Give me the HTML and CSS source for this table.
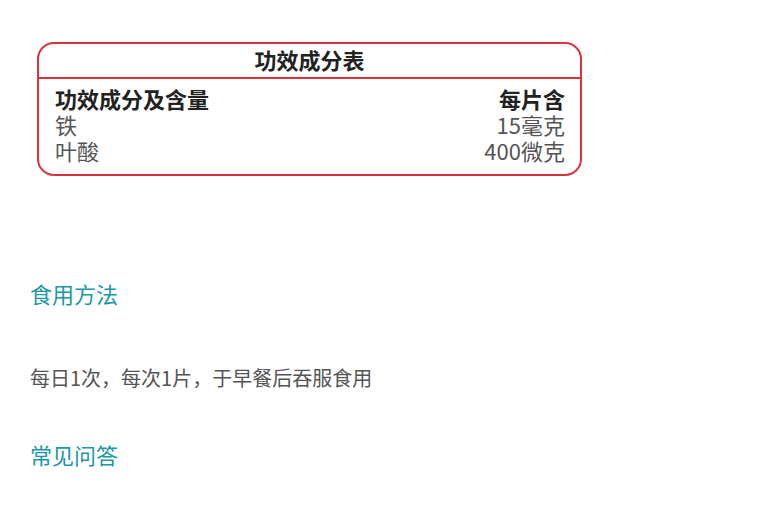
FILE: index.html
```html
<!DOCTYPE html>
<html lang="zh-CN">
<head>
    <meta charset="UTF-8" />
    <title>功效成分</title>
    <link rel="stylesheet" href="styles.css">
</head>
<body>

<div class="page">
    <div class="facts">
        <div class="facts-title">功效成分表</div>
        <div class="facts-body">
            <div class="facts-row head">
                <span>功效成分及含量</span>
                <span>每片含</span>
            </div>
            <div class="facts-row">
                <span>铁</span>
                <span>15毫克</span>
            </div>
            <div class="facts-row">
                <span>叶酸</span>
                <span>400微克</span>
            </div>
        </div>
    </div>

    <h2 class="section-title first">食用方法</h2>
    <p class="section-text">每日1次，每次1片，于早餐后吞服食用</p>

    <h2 class="section-title">常见问答</h2>
</div>

</body>
</html>
```
FILE: styles.css
```css
body {
    margin: 0;
    padding: 0;
    background: #fff;
    font-family: "Noto Sans CJK SC", "Noto Sans", sans-serif;
}

.page {
    padding: 42px 30px 0 30px;
}

.facts {
    width: 545px;
    margin-left: 7px;
    box-sizing: border-box;
    border: 2px solid #d9343d;
    border-radius: 17px;
}

.facts-title {
    height: 33px;
    line-height: 31px;
    text-align: center;
    font-size: 22px;
    font-weight: bold;
    color: #222;
    border-bottom: 2px solid #d9343d;
}

.facts-body {
    padding: 6px 15px 11px 16px;
}

.facts-row {
    display: flex;
    justify-content: space-between;
    font-size: 22px;
    line-height: 26px;
    color: #555;
}

.facts-row.head {
    font-weight: bold;
    color: #222;
}

.section-title {
    margin: 0;
    font-size: 22px;
    font-weight: normal;
    line-height: 30px;
    color: #1a98a6;
}

.section-title.first {
    margin-top: 102px;
}

.section-text {
    margin: 57px 0 48px 0;
    font-size: 20px;
    line-height: 26px;
    color: #555;
}
```
